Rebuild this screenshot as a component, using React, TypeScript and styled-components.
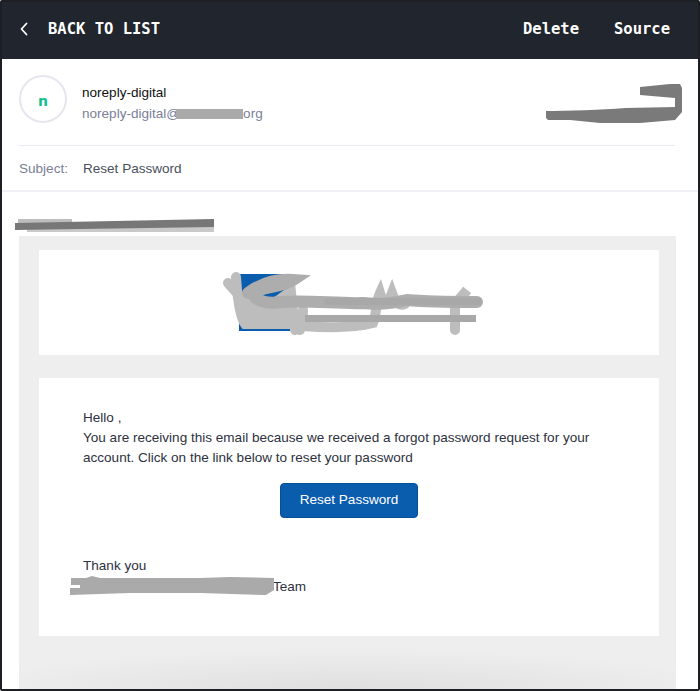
import React from 'react'
import styled, { createGlobalStyle } from 'styled-components'

const GlobalStyle = createGlobalStyle`
  html, body { margin: 0; padding: 0; background: #fff; }
  body { font-family: "Liberation Sans", Arial, sans-serif; }
`

const Frame = styled.div`
  box-sizing: border-box;
  width: 700px;
  height: 691px;
  border: 2px solid #1d1f24;
  border-radius: 2px;
  background: #fff;
  overflow: hidden;
  display: flex;
  flex-direction: column;
`

const TopBar = styled.header`
  box-sizing: border-box;
  flex: none;
  height: 57px;
  background: #21252d;
  color: #fff;
  display: flex;
  align-items: center;
  padding: 0 28px 4px 17px;
  font-family: "DejaVu Sans Mono", "Liberation Mono", monospace;
  font-weight: 700;
  font-size: 15.5px;
`

const BackLink = styled.div`
  display: flex;
  align-items: center;
  gap: 19px;
  flex: 1;
`

const Action = styled.span`
  margin-left: 35px;
`

const Sender = styled.section`
  position: relative;
  flex: none;
  display: flex;
  align-items: flex-start;
  height: 87px;
  margin: 0 23px 0 17px;
  gap: 15px;
  padding-top: 16px;
  box-sizing: border-box;
  border-bottom: 1px solid #e9e9f3;
`

const Avatar = styled.div`
  box-sizing: border-box;
  width: 48px;
  height: 48px;
  padding-top: 3px;
  border: 2px solid #e6e6f0;
  border-radius: 50%;
  display: flex;
  align-items: center;
  justify-content: center;
  color: #12c08e;
  font-family: "DejaVu Sans", sans-serif;
  font-weight: 700;
  font-size: 14px;
`

const SenderText = styled.div`
  padding-top: 7px;
`

const SenderName = styled.div`
  color: #111;
  font-size: 13.55px;
  line-height: 21px;
`

const SenderMail = styled.div`
  color: #7b8098;
  font-size: 13.55px;
  line-height: 21px;
  display: flex;
  align-items: center;
`

const MailMask = styled.span`
  display: inline-block;
  width: 67px;
  height: 10px;
  margin-left: -4px;
  background: #aaa;
`

const CornerMark = styled.svg`
  position: absolute;
  right: -7px;
  top: 24px;
`

const SubjectRow = styled.div`
  box-sizing: border-box;
  flex: none;
  display: flex;
  height: 46px;
  align-items: center;
  padding: 1px 17px 0;
  font-size: 13.55px;
  border-bottom: 2px solid #f0f0f6;
  color: #4a4f5c;
`

const SubjectLabel = styled.span`
  width: 64px;
  color: #7b8098;
`

const Recipient = styled.div`
  flex: none;
  height: 44px;
  position: relative;
`

const RecipientMark = styled.svg`
  position: absolute;
  left: 7px;
  top: 27px;
`

const Mail = styled.main`
  flex: 1;
  margin: 0 22px 0 17px;
  padding: 14px 17px 0 20px;
  background:
    radial-gradient(ellipse 58% 40px at 50% 100%, #dfdfdf, rgba(223, 223, 223, 0)),
    #eeeeee;
  display: flex;
  flex-direction: column;
  gap: 23px;
`

const Card = styled.div<{ $height: number }>`
  box-sizing: border-box;
  height: ${(p) => p.$height}px;
  background: #fff;
  color: #2d3140;
  font-size: 13.55px;
  line-height: 20px;
`

const LogoCard = styled(Card)`
  position: relative;
`

const LogoBlock = styled.div`
  position: absolute;
  left: 200px;
  top: 24px;
  width: 51px;
  height: 57px;
  background: #0a5cad;
`

const LogoMark = styled.svg`
  position: absolute;
  left: 180px;
  top: 14px;
`

const BodyCard = styled(Card)`
  padding: 30px 44px 0;
`

const ResetRow = styled.div`
  display: flex;
  justify-content: center;
  margin: 15px 0 38px;
`

const ResetButton = styled.button`
  width: 138px;
  height: 35px;
  background: #0a5cad;
  color: #fff;
  border: 1px solid #084f96;
  border-radius: 4px;
  font-family: inherit;
  font-size: 13.55px;
  padding: 0 0 2px;
`

const TeamLine = styled.div`
  display: flex;
  margin-top: 1px;
`

const TeamMask = styled.span`
  position: relative;
  width: 190px;
  height: 20px;
`

const TeamMark = styled.svg`
  position: absolute;
  left: -13px;
  top: -1px;
`

export default function App() {
  return (
    <>
      <GlobalStyle />
      <Frame>
        <TopBar>
          <BackLink>
            <svg width="10" height="14" viewBox="0 0 10 14" fill="none">
              <path d="M7.5 1.5 2.5 7l5 5.5" stroke="#fff" strokeWidth="1.8" strokeLinecap="round" strokeLinejoin="round" />
            </svg>
            <span>BACK TO LIST</span>
          </BackLink>
          <Action>Delete</Action>
          <Action>Source</Action>
        </TopBar>

        <Sender>
          <Avatar>n</Avatar>
          <SenderText>
            <SenderName>noreply-digital</SenderName>
            <SenderMail>
              noreply-digital@
              <MailMask />
              org
            </SenderMail>
          </SenderText>
          <CornerMark width="140" height="44" viewBox="0 0 140 44">
            <path
              d="M4 28C25 28 60 27 83 25L133 24V15L98 12V4L128 1H138L140 5V29L133 37 98 40H58L28 37H6L4 35Z"
              fill="#7a7a7a"
            />
          </CornerMark>
        </Sender>

        <SubjectRow>
          <SubjectLabel>Subject:</SubjectLabel>
          Reset Password
        </SubjectRow>

        <Recipient>
          <RecipientMark width="206" height="14" viewBox="0 0 206 14">
            <rect x="9" y="0" width="54" height="6" fill="#bdbdbd" />
            <rect x="18" y="8" width="187" height="5" fill="#c9c9c9" />
            <path d="M6 4 205 0V8L6 11Z" fill="#777" />
          </RecipientMark>
        </Recipient>

        <Mail>
          <LogoCard $height={105}>
            <LogoBlock />
            <LogoMark width="270" height="80" viewBox="0 0 270 80" fill="none" strokeLinecap="round">
              <path
                d="M9 19 24 36M17 13C18 35 22 55 26 60H70M26 42H68M24 52H68M28 30 65 58M30 58 68 30M71 19 76 66M81 66C84 58 84 50 84 46M84 62C110 64 135 64 154 59 158 50 156 40 161 29 165 42 168 42 173 29 177 40 180 42 186 40M236 66V43L248 26 236 40"
                stroke="#bdbdbd"
                strokeWidth="10"
              />
              <path
                d="M29 29C44 18 60 15 74 16 62 24 40 22 34 30 38 38 50 40 61 38 90 36 120 40 144 39 160 41 175 39 188 36 210 38 235 38 258 38"
                stroke="#adadad"
                strokeWidth="12"
              />
              <rect x="106" y="34" width="156" height="7" fill="#a8a8a8" />
              <rect x="86" y="51" width="171" height="7" fill="#a8a8a8" />
            </LogoMark>
          </LogoCard>

          <BodyCard $height={258}>
            <div>Hello ,</div>
            <div>
              You are receiving this email because we received a forgot password request for your account. Click on the
              link below to reset your password
            </div>
            <ResetRow>
              <ResetButton>Reset Password</ResetButton>
            </ResetRow>
            <div>Thank you</div>
            <TeamLine>
              <TeamMask>
                <TeamMark width="204" height="22" viewBox="0 0 204 22">
                  <path d="M1 2H16L22 0 30 2H130L160 1 204 2V14L196 19 130 17 60 17 0 19V12H10V9H1Z" fill="#aaa" />
                </TeamMark>
              </TeamMask>
              Team
            </TeamLine>
          </BodyCard>
        </Mail>
      </Frame>
    </>
  )
}
